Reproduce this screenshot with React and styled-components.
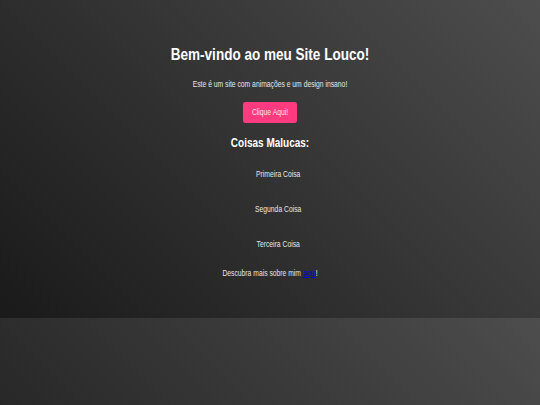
import React from "react";
import styled, { createGlobalStyle } from "styled-components";

const GlobalStyle = createGlobalStyle`
html{
  background: linear-gradient(45deg, #1a1a1a, #4d4d4d) 0 0 / 100% 318px repeat;
  min-height:100%;
}
body{
  margin:0;
  font-family:"Liberation Sans", Arial, sans-serif;
  color:#fff;
}
`;

// the reference uses a narrow face; squeeze the regular one to match
const Page = styled.div`
display:flex;
flex-direction:column;
align-items:center;
text-align:center;
padding:44px 0 40px;
transform:scaleX(0.82);
transform-origin:50% 0;
`;

const Title = styled.h1`
margin:0;
font-size:16.5px;
line-height:20px;
font-weight:700;
color:#fff;
`;

const Intro = styled.p`
margin:${props => props.mt} 0 0;
font-size:8.25px;
line-height:10px;
color:#e6e6e6;
`;

const Button = styled.button`
margin-top:12px;
height:21px;
padding:0 10.5px;
border:none;
border-radius:3px;
background-color:#ff3b7f;
color:#ffe3ee;
font-family:inherit;
font-size:8.25px;
cursor:pointer;
`;

const SubTitle = styled.h2`
margin:13.5px 0 0;
font-size:12.2px;
line-height:15px;
font-weight:700;
color:#fff;
`;

const List = styled.ul`
list-style:none;
margin:19px 0 0;
padding:0 0 0 20px;
display:flex;
flex-direction:column;
gap:25px;
`;

const Item = styled.li`
font-size:8.25px;
line-height:10px;
color:#e6e6e6;
`;

const Link = styled.a`
color:#0000ee;
text-decoration:underline;
`;

const items = ["Primeira Coisa", "Segunda Coisa", "Terceira Coisa"];

const App = () => {
  return <>
    <GlobalStyle />
    <Page>
      <Title>Bem-vindo ao meu Site Louco!</Title>
      <Intro mt="15.5px">Este é um site com animações e um design insano!</Intro>
      <Button>Clique Aqui!</Button>
      <SubTitle>Coisas Malucas:</SubTitle>
      <List>
        {items.map(i => <Item key={i}>{i}</Item>)}
      </List>
      <Intro mt="18.5px">Descubra mais sobre mim <Link href="#">aqui</Link>!</Intro>
    </Page>
  </>
}

export default App;
